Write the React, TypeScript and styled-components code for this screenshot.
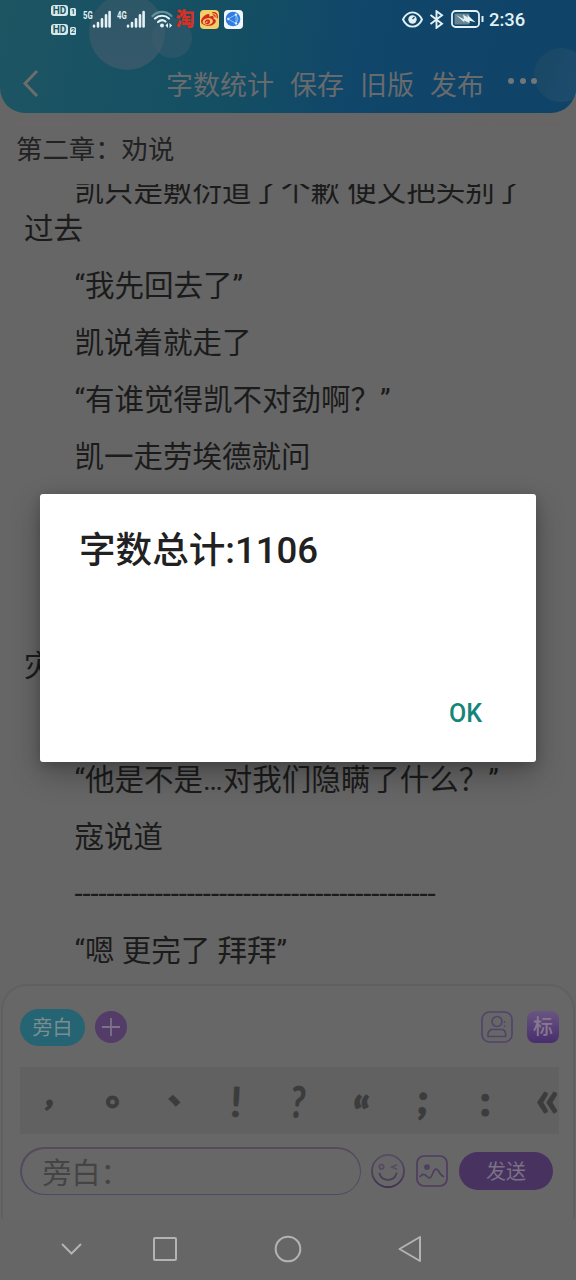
import React from "react";
import styled, { createGlobalStyle } from "styled-components";
import { FaWeibo } from "react-icons/fa";

const FONT = `Roboto, "Noto Sans CJK SC", sans-serif`;

const GlobalStyle = createGlobalStyle`
  * { box-sizing: border-box; }
  body { margin: 0; background: #666; font-family: ${FONT}; }
`;

const Screen = styled.div`
  position: relative;
  display: flex;
  flex-direction: column;
  width: 576px;
  height: 1280px;
  overflow: hidden;
  background: #666;
`;

const Header = styled.header`
  position: relative;
  flex: none;
  height: 113px;
  overflow: hidden;
  border-radius: 0 0 25px 25px;
  background: linear-gradient(100deg, #1d5563 0%, #144e63 42%, #10466a 62%, #0f4367 100%);
`;

const Bubble = styled.span<{ $x: number; $y: number; $r: number; $tone: string }>`
  position: absolute;
  left: ${(p) => p.$x - p.$r}px;
  top: ${(p) => p.$y - p.$r}px;
  width: ${(p) => p.$r * 2}px;
  height: ${(p) => p.$r * 2}px;
  border-radius: 50%;
  background: ${(p) => p.$tone};
`;

const StatusBar = styled.div`
  position: relative;
  display: flex;
  align-items: center;
  height: 38px;
  padding: 0 51px;
  color: #e3f1f5;
`;

const SimColumn = styled.div`
  display: flex;
  flex-direction: column;
  gap: 8px;
  width: 31.5px;
  margin-top: 2px;
`;

const SimRow = styled.div`
  display: flex;
  align-items: center;
  gap: 2px;
  height: 11px;
`;

const HdBadge = styled.span`
  width: 17px;
  height: 11px;
  border-radius: 3px;
  background: #d5e8ea;
  color: #1d5563;
  font-size: 10px;
  font-weight: 700;
  line-height: 11.5px;
  text-align: center;
`;

const SimNumber = styled.span`
  width: 6px;
  height: 8px;
  margin-top: 2px;
  border-radius: 1.5px;
  background: #d5e8ea;
  color: #1d5563;
  font-size: 7px;
  font-weight: 700;
  line-height: 8px;
  text-align: center;
`;

const Network = styled.div`
  display: flex;
  align-items: flex-start;
  width: 34px;
  height: 19px;
`;

const NetworkLabel = styled.span`
  width: 9px;
  height: 10px;
  font-size: 11px;
  font-weight: 700;
  line-height: 11px;
  transform: scaleX(0.7);
  transform-origin: left;
`;

const TaoBadge = styled.span`
  width: 19px;
  margin-left: 3px;
  color: #d93025;
  font-size: 19px;
  font-weight: 900;
  line-height: 20px;
  transform: translateY(1px);
`;

const AppBadge = styled.span<{ $bg: string }>`
  display: grid;
  place-items: center;
  width: 19px;
  height: 19px;
  margin-left: 5px;
  border-radius: 4px;
  background: ${(p) => p.$bg};
  color: #d5281f;
`;

const StatusRight = styled.div`
  display: flex;
  align-items: center;
  gap: 6.5px;
  margin-left: auto;
`;

const Clock = styled.span`
  width: 36px;
  margin-left: -1px;
  font-size: 18.4px;
  font-weight: 500;
  line-height: 20px;
  white-space: nowrap;
  transform: translateY(1px);
`;

const Toolbar = styled.nav`
  position: relative;
  display: flex;
  align-items: center;
  height: 94px;
  margin-top: -2px;
  padding-left: 22px;
  color: #686b6e;
`;

const BackButton = styled.div`
  width: 144px;
  height: 30px;
`;

const Actions = styled.div`
  display: flex;
  gap: 16px;
  padding-top: 5px;
  font-size: 27px;
  line-height: 36px;
`;

const More = styled.div`
  display: flex;
  gap: 5.5px;
  margin: 0 0 4px 24px;

  i {
    width: 6px;
    height: 6px;
    border-radius: 50%;
    background: #707679;
  }
`;

const ChapterTitle = styled.div`
  flex: none;
  height: 61px;
  margin: 10px 16px 0;
  border-top: 1px solid;
  border-image: linear-gradient(90deg, #76606e, #6c6070 40%, #62686a 60%, #705f5a) 1;
  color: #222;
  font-size: 26.4px;
  line-height: 53px;
`;

const Story = styled.main`
  flex: none;
  height: 800px;
  overflow: hidden;
  padding: 0 24px;
  color: #1b1b1b;
  font-size: 29.5px;

  & > p:first-child { margin-top: -12px; }
`;

const Paragraph = styled.p<{ $tracking?: number }>`
  min-height: 38px;
  margin: 0 0 19px;
  letter-spacing: ${(p) => p.$tracking ?? 0}px;
  line-height: 38px;
  text-indent: 50.5px;
  white-space: pre;
`;

const Composer = styled.section`
  flex: none;
  height: 234px;
  padding: 23px 16px 0 18px;
  margin: 0 1px;
  border: 2px solid #606060;
  border-bottom: 0;
  border-radius: 26px 26px 0 0;
  background: #676767;
`;

const RoleRow = styled.div`
  display: flex;
  align-items: center;
  height: 37px;
`;

const RolePill = styled.span`
  width: 65px;
  height: 37px;
  margin-left: -1px;
  border-radius: 19px;
  background: #256473;
  color: #7b8d91;
  font-size: 20px;
  line-height: 38px;
  text-align: center;
`;

const AddRole = styled.span`
  display: grid;
  place-items: center;
  width: 32px;
  height: 32px;
  margin: 0 0 1px 9.5px;
  border-radius: 50%;
  background: #533c68;
`;

const RoleTools = styled.div`
  display: flex;
  gap: 14px;
  margin: 0 -2px 1px auto;
`;

const MarkButton = styled.span`
  width: 32px;
  height: 32px;
  border-radius: 8px;
  background: linear-gradient(#695582, #482d6d);
  color: #87798f;
  font-size: 20px;
  font-weight: 500;
  line-height: 32px;
  text-align: center;
`;

const Symbols = styled.div`
  display: flex;
  align-items: center;
  width: 539px;
  height: 67px;
  margin: 21px 0 0 -1px;
  overflow: hidden;
  background: #616161;
`;

const SymbolKey = styled.span<{ $size: number; $dx?: number; $dy?: number; $tilt?: number; $squash?: number; $bold?: number }>`
  flex: none;
  width: 62.3px;
  height: 48px;
  color: #3c3c3c;
  font-family: Lato, "Noto Sans CJK SC", sans-serif;
  font-size: ${(p) => p.$size}px;
  font-weight: 900;
  line-height: 48px;
  text-align: center;
  -webkit-text-stroke: ${(p) => p.$bold ?? 0}px #3c3c3c;
  transform: translate(${(p) => p.$dx ?? 0}px, ${(p) => p.$dy ?? 0}px) rotate(${(p) => p.$tilt ?? 0}deg)
    scaleX(${(p) => p.$squash ?? 1});
`;

const InputRow = styled.div`
  display: flex;
  align-items: center;
  height: 48px;
  margin: 13px 0 0 -1px;
`;

const InputFrame = styled.div`
  width: 341px;
  height: 48px;
  margin-right: 10px;
  padding: 1.5px;
  border-radius: 24px;
  background: linear-gradient(#574a5b, #4b4a62);
`;

const Input = styled.div`
  height: 45px;
  padding-left: 21px;
  border-radius: 23px;
  background: #676767;
  color: #444;
  font-size: 29px;
  line-height: 50px;
`;

const SendButton = styled.span`
  width: 94px;
  height: 38px;
  margin-left: 11px;
  border-radius: 19px;
  background: #48325f;
  color: #7c7186;
  font-size: 20px;
  line-height: 41px;
  text-align: center;
`;

const NavBar = styled.footer`
  flex: none;
  display: flex;
  align-items: center;
  height: 62px;
  padding-left: 60px;
  color: #b3b3b3;

  svg { display: block; }
`;

const NavSlot = styled.span<{ $gap: number }>`
  margin-left: ${(p) => p.$gap}px;
`;

const Dialog = styled.div`
  position: absolute;
  left: 40px;
  top: 494px;
  display: flex;
  flex-direction: column;
  justify-content: space-between;
  width: 496px;
  height: 268px;
  padding: 32px 54px 31px 39px;
  border-radius: 3px;
  background: #fff;
  box-shadow: 0 12px 30px rgba(0, 0, 0, 0.28), 0 2px 12px rgba(0, 0, 0, 0.16);
`;

const DialogTitle = styled.h1`
  margin: 0;
  color: #212121;
  font-size: 36.6px;
  font-weight: 500;
  line-height: 50px;
`;

const DialogAction = styled.span`
  align-self: flex-end;
  color: #14857a;
  font-size: 25px;
  font-weight: 500;
  line-height: 34px;
`;

const Bars = () => (
  <svg width="19" height="18" viewBox="0 0 19 18" stroke="currentColor" strokeWidth="2.6" strokeLinecap="round">
    <path d="M2 16.5v-.6M6 16.5v-3.4M10 16.5V9.4M14 16.5V5.4M17.6 16.5V2" />
  </svg>
);

const Wifi = () => (
  <svg width="22" height="19" viewBox="0 0 22 19" fill="none" strokeWidth="2.2" strokeLinecap="round">
    <path d="M1.500 6C7 .5 15 .5 20.500 6" stroke="#668f9b" />
    <path d="M4 8.500C8 4.800 14 4.800 18 8.500M7 12C9.500 9.800 12.500 9.800 14.500 11.500" stroke="currentColor" />
    <circle cx="11" cy="15.500" r="1.900" fill="currentColor" />
    <path d="M17 13v5l-2.600-2.500zM18.500 13v5l2.600-2.500z" fill="currentColor" />
  </svg>
);

const GlobeIcon = () => (
  <svg width="16" height="16" viewBox="0 0 16 16">
    <circle cx="8" cy="8" r="7.300" fill="#2f7de0" />
    <path d="M3 8l8-4.500v9zM11 3.500l2 4.500-2 4.500" fill="none" stroke="#a9cdf5" strokeWidth=".8" />
    <g fill="#dcebfb">
      <circle cx="3.300" cy="8" r="1.200" />
      <circle cx="11" cy="3.600" r="1.200" />
      <circle cx="11" cy="12.400" r="1.200" />
    </g>
  </svg>
);

const Eye = () => (
  <svg width="21" height="17" viewBox="0 0 21 17" fill="none" stroke="currentColor" strokeWidth="1.900">
    <path d="M1 8.500C5.500-1 15.500-1 20 8.500C15.500 18 5.500 18 1 8.500Z" strokeLinejoin="round" />
    <circle cx="10.500" cy="8.500" r="4.200" fill="currentColor" stroke="none" />
    <path d="M10.500 8l2-2" stroke="#10466a" strokeWidth="1.200" />
  </svg>
);

const Bluetooth = () => (
  <svg width="15" height="19" viewBox="0 0 15 19" fill="none" stroke="currentColor" strokeWidth="1.900">
    <path d="M1.500 5l11.500 8.800-5.500 4V1.200l5.500 4L1.500 14" />
  </svg>
);

const Battery = () => (
  <svg width="33" height="18" viewBox="0 0 33 18" fill="none">
    <rect x="1" y="1" width="27" height="16" rx="3.500" stroke="currentColor" strokeWidth="1.800" />
    <rect x="3.500" y="3.500" width="15" height="11" rx="1" fill="#668493" />
    <path d="M5 5l8 4.200-1-4.700 5 3-1-3 8.500 7.700-6-1.400 0 2.200-5.500-2.500.500 2z" fill="currentColor" />
    <path d="M31.500 6v6" stroke="currentColor" strokeWidth="2" />
  </svg>
);

const Chevron = () => (
  <svg width="18" height="30" viewBox="0 0 18 30" fill="none" stroke="#6c6d6b" strokeWidth="3">
    <path d="M15 3L3 15.500 15 28" />
  </svg>
);

const PersonIcon = () => (
  <svg width="32" height="32" viewBox="0 0 32 32" fill="none" stroke="#51436a" strokeWidth="1.600">
    <rect x="1" y="1" width="30" height="30" rx="7.500" />
    <circle cx="16" cy="10.500" r="5" />
    <path d="M10 18.500h12c2.500 1.500 3 4 2.500 7H7c-.500-3 .500-5.500 3-7Z" strokeLinejoin="round" />
    <path d="M23 10.500l1.200 1M23 14.500l1.200 1" />
  </svg>
);

const SmileIcon = () => (
  <svg width="34" height="34" viewBox="0 0 34 34" fill="none" strokeWidth="1.800" strokeLinecap="round">
    <defs>
      <linearGradient id="smile" x1="0" y1="0" x2="0" y2="1">
        <stop stopColor="#594d65" />
        <stop offset="1" stopColor="#423052" />
      </linearGradient>
    </defs>
    <circle cx="17" cy="17" r="16" stroke="url(#smile)" />
    <circle cx="10.500" cy="12.800" r="2.200" stroke="#574a66" />
    <path d="M25.500 11l-5 2 5 2" stroke="#574a66" strokeWidth="1.400" />
    <path d="M8.500 19.500C11 28 23 28 25.500 19.500" stroke="#4b3c5c" />
  </svg>
);

const PictureIcon = () => (
  <svg
    width="32"
    height="32"
    viewBox="0 0 32 32"
    fill="none"
    stroke="#4f3d61"
    strokeWidth="1.700"
    strokeLinecap="round"
    style={{ marginLeft: 11 }}
  >
    <rect x="1" y="1" width="30" height="30" rx="7" />
    <circle cx="11" cy="12" r="2" fill="#51415f" />
    <path d="M4 21.500C7 18.500 9 19 11 21.500C13.500 24 15 23 16.500 19C18 14.500 20 12.500 22.500 16C24.500 19.500 25.500 21 27.500 21.500" />
  </svg>
);

export default function App() {
  return (
    <Screen>
      <GlobalStyle />
      <Header>
        <Bubble $x={127} $y={32} $r={38} $tone="linear-gradient(#2c5666, #36596a)" />
        <Bubble $x={172} $y={38} $r={20} $tone="rgba(62, 94, 110, .45)" />
        <Bubble $x={561} $y={75} $r={27} $tone="linear-gradient(110deg, #194764, #1d4d70)" />
        <StatusBar>
          <SimColumn>
            <SimRow><HdBadge>HD</HdBadge><SimNumber>1</SimNumber></SimRow>
            <SimRow><HdBadge>HD</HdBadge><SimNumber>2</SimNumber></SimRow>
          </SimColumn>
          <Network><NetworkLabel>5G</NetworkLabel><Bars /></Network>
          <Network><NetworkLabel>4G</NetworkLabel><Bars /></Network>
          <Wifi />
          <TaoBadge>淘</TaoBadge>
          <AppBadge $bg="#f3cf67"><FaWeibo size={17} /></AppBadge>
          <AppBadge $bg="#f1f6fa"><GlobeIcon /></AppBadge>
          <StatusRight>
            <Eye />
            <Bluetooth />
            <Battery />
            <Clock>2:36</Clock>
          </StatusRight>
        </StatusBar>
        <Toolbar>
          <BackButton><Chevron /></BackButton>
          <Actions>
            <span>字数统计</span>
            <span>保存</span>
            <span>旧版</span>
            <span>发布</span>
          </Actions>
          <More><i /><i /><i /></More>
        </Toolbar>
      </Header>

      <ChapterTitle>第二章：劝说</ChapterTitle>

      <Story>
        <Paragraph>{"凯只是敷衍道了个歉 便又把头别了\n过去"}</Paragraph>
        <Paragraph>“我先回去了”</Paragraph>
        <Paragraph>凯说着就走了</Paragraph>
        <Paragraph>“有谁觉得凯不对劲啊？”</Paragraph>
        <Paragraph>凯一走劳埃德就问</Paragraph>
        <Paragraph />
        <Paragraph />
        <Paragraph>{" \n灾"}</Paragraph>
        <Paragraph />
        <Paragraph>“他是不是…对我们隐瞒了什么？”</Paragraph>
        <Paragraph>寇说道</Paragraph>
        <Paragraph $tracking={-0.13}>{"-".repeat(45)}</Paragraph>
        <Paragraph>“嗯 更完了 拜拜”</Paragraph>
      </Story>

      <Composer>
        <RoleRow>
          <RolePill>旁白</RolePill>
          <AddRole>
            <svg width="18" height="18" viewBox="0 0 18 18" stroke="#7d7288" strokeWidth="1.800">
              <path d="M9 0v18M0 9h18" />
            </svg>
          </AddRole>
          <RoleTools>
            <PersonIcon />
            <MarkButton>标</MarkButton>
          </RoleTools>
        </RoleRow>
        <Symbols>
          <SymbolKey $size={36} $dx={1} $dy={-9} $tilt={14} $bold={1}>,</SymbolKey>
          <SymbolKey $size={36} $dx={10} $dy={-10} $bold={1}>。</SymbolKey>
          <SymbolKey $size={32} $dx={8} $dy={-10} $bold={1}>、</SymbolKey>
          <SymbolKey $size={42} $dx={-2} $tilt={3}>!</SymbolKey>
          <SymbolKey $size={44} $dx={-2} $tilt={6} $squash={0.75}>?</SymbolKey>
          <SymbolKey $size={42} $dx={-1} $dy={11} $bold={1}>“</SymbolKey>
          <SymbolKey $size={42} $dx={-2} $dy={-3} $tilt={4} $bold={1}>;</SymbolKey>
          <SymbolKey $size={42} $dx={-2} $dy={-1} $bold={1}>:</SymbolKey>
          <SymbolKey $size={54} $dx={-2} $dy={-4}>«</SymbolKey>
        </Symbols>
        <InputRow>
          <InputFrame><Input>旁白：</Input></InputFrame>
          <SmileIcon />
          <PictureIcon />
          <SendButton>发送</SendButton>
        </InputRow>
      </Composer>

      <NavBar>
        <svg width="23" height="14" viewBox="0 0 23 14" fill="none" stroke="currentColor" strokeWidth="2">
          <path d="M2 2l9.500 9.500L21 2" />
        </svg>
        <NavSlot $gap={69}>
          <svg width="26" height="26" viewBox="0 0 26 26" fill="none" stroke="currentColor" strokeWidth="2">
            <rect x="2" y="2" width="22" height="22" rx="1" />
          </svg>
        </NavSlot>
        <NavSlot $gap={96}>
          <svg width="28" height="28" viewBox="0 0 28 28" fill="none" stroke="currentColor" strokeWidth="2">
            <circle cx="14" cy="14" r="12.300" />
          </svg>
        </NavSlot>
        <NavSlot $gap={95}>
          <svg width="26" height="28" viewBox="0 0 26 28" fill="none" stroke="currentColor" strokeWidth="2" strokeLinejoin="round">
            <path d="M23 2v24L2.500 14Z" />
          </svg>
        </NavSlot>
      </NavBar>

      <Dialog>
        <DialogTitle>字数总计:1106</DialogTitle>
        <DialogAction>OK</DialogAction>
      </Dialog>
    </Screen>
  );
}
